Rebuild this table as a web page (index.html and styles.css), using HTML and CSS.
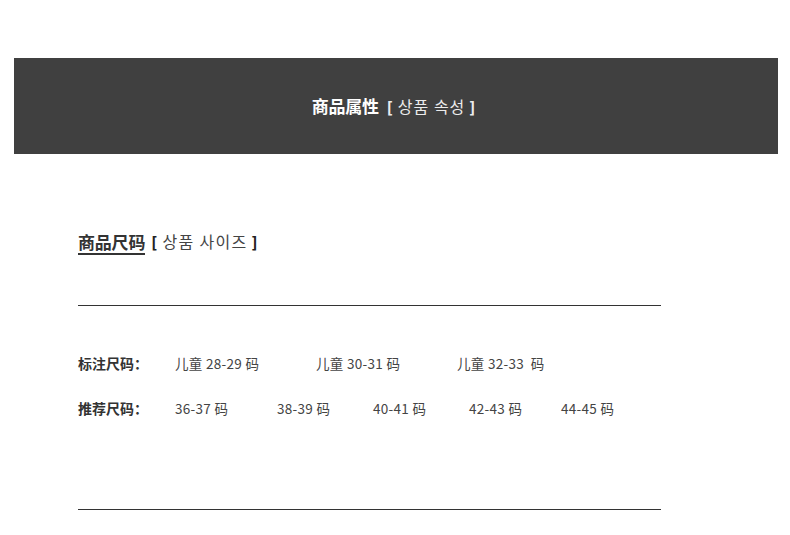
FILE: index.html
```html
<!DOCTYPE html>
<html lang="zh">
<head>
<meta charset="utf-8">
<link rel="stylesheet" href="styles.css">
</head>
<body>
<div class="page">
  <div class="banner">
    <span class="banner-cn">商品属性</span><span class="banner-kr"><span class="br">[</span>상품 속성<span class="br">]</span></span>
  </div>
  <div class="content">
    <div class="sec-title"><span class="sec-cn">商品尺码</span><span class="sec-kr"><span class="br">[</span>상품 사이즈<span class="br">]</span></span></div>
    <div class="rule first"></div>
    <div class="row r1">
      <div class="label">标注尺码：</div>
      <div class="cell">儿童 28-29 码</div>
      <div class="cell">儿童 30-31 码</div>
      <div class="cell">儿童 32-33 &nbsp;码</div>
    </div>
    <div class="row r2">
      <div class="label">推荐尺码：</div>
      <div class="cell c1">36-37 码</div>
      <div class="cell">38-39 码</div>
      <div class="cell">40-41 码</div>
      <div class="cell c4">42-43 码</div>
      <div class="cell">44-45 码</div>
    </div>
    <div class="rule last"></div>
  </div>
</div>
</body>
</html>
```

FILE: styles.css
```css
* { box-sizing: border-box; }
html, body { margin: 0; padding: 0; background: #fff; }
body {
  font-family: "Noto Sans CJK SC", "Noto Sans CJK KR", "Noto Sans", sans-serif;
  color: #333;
}
.page { padding-top: 58px; width: 790px; }
.banner {
  margin-left: 14px;
  width: 764px;
  height: 96px;
  background: #404040;
  color: #fff;
  display: flex;
  align-items: center;
  justify-content: center;
  line-height: 20px;
}
.banner-cn { font-size: 17px; font-weight: 700; letter-spacing: -0.2px; }
.banner-kr {
  font-family: "Noto Sans CJK KR", sans-serif;
  font-size: 16px;
  color: #ececec;
  margin-left: 4px;
  letter-spacing: 1px;
}
.br { font-weight: 900; margin: 0 4px; font-size: 15px; }
.content { padding-left: 78px; padding-top: 76px; }
.sec-title { display: flex; align-items: flex-start; height: 25px; }
.sec-cn {
  font-size: 17px;
  font-weight: 700;
  line-height: 23px;
  color: #333;
  border-bottom: 2px solid #333;
  letter-spacing: -0.2px;
}
.sec-kr {
  font-family: "Noto Sans CJK KR", sans-serif;
  font-size: 16px;
  line-height: 23px;
  color: #444;
  margin-left: 2px;
  letter-spacing: 1.3px;
}
.sec-kr .br { color: #222; }
.rule { width: 583px; height: 1px; background: #333; }
.rule.first { margin-top: 50px; }
.row { display: flex; align-items: center; height: 20px; font-size: 13px; color: #444; }
.row.r1 { margin-top: 47px; }
.row.r2 { margin-top: 25px; }
.label { width: 97px; font-size: 14px; font-weight: 700; color: #333; }
.r1 .cell { width: 141px; }
.r2 .cell { width: 96px; }
.r2 .cell.c1 { width: 102px; }
.r2 .cell.c4 { width: 92px; }
.cell { white-space: nowrap; letter-spacing: 0.3px; font-size: 13.5px; }
.rule.last { margin-top: 91px; }
```
